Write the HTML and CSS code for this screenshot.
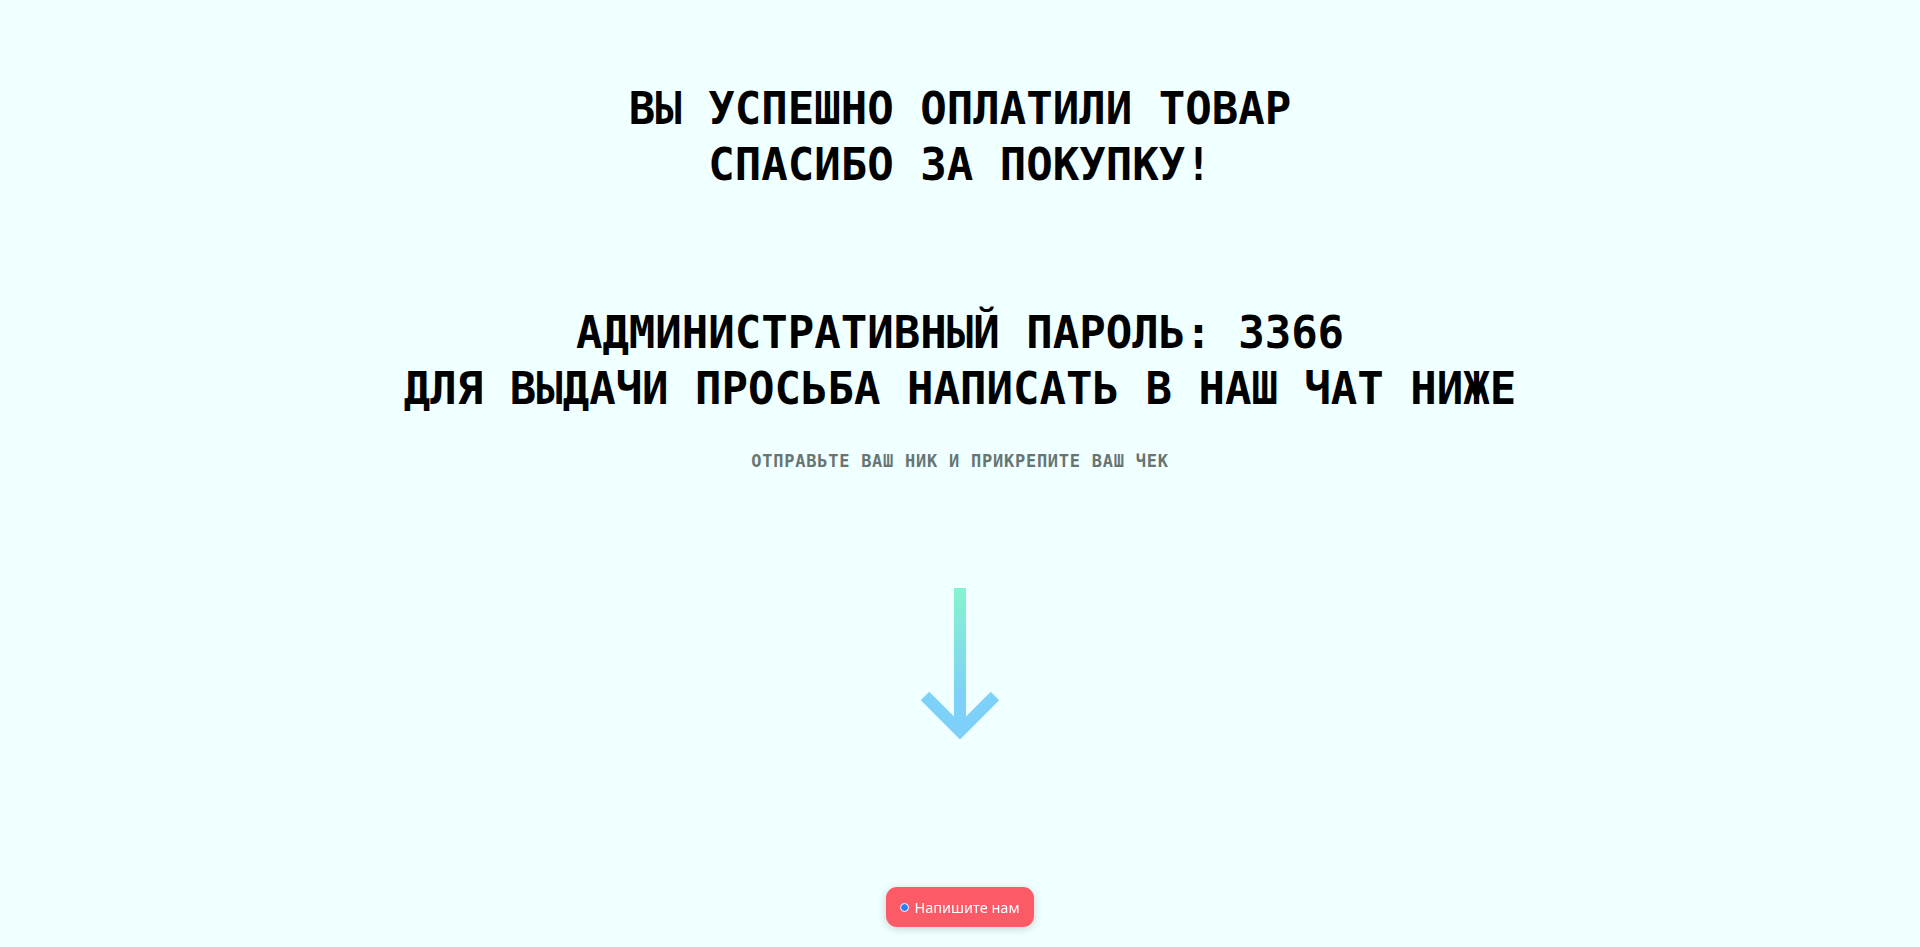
FILE: index.html
```html
<!DOCTYPE html>
<html lang="ru">
<head>
<meta charset="utf-8">
<title>Спасибо за покупку</title>
<link rel="stylesheet" href="styles.css">
</head>
<body>
<main class="page">
  <h1 class="title">ВЫ УСПЕШНО ОПЛАТИЛИ ТОВАР<br>СПАСИБО ЗА ПОКУПКУ!</h1>
  <h2 class="title title-second">АДМИНИСТРАТИВНЫЙ ПАРОЛЬ: 3366<br>ДЛЯ ВЫДАЧИ ПРОСЬБА НАПИСАТЬ В НАШ ЧАТ НИЖЕ</h2>
  <p class="subtitle">ОТПРАВЬТЕ ВАШ НИК И ПРИКРЕПИТЕ ВАШ ЧЕК</p>
  <div class="arrow">
    <svg width="80" height="156" viewBox="0 0 80 156">
      <defs>
        <linearGradient id="ag" x1="0" y1="0" x2="0" y2="156" gradientUnits="userSpaceOnUse">
          <stop offset="0" stop-color="#87f3cd"/>
          <stop offset="0.7" stop-color="#7dd1f8"/>
          <stop offset="1" stop-color="#7dcff9"/>
        </linearGradient>
      </defs>
      <rect x="34" y="0" width="12" height="144" fill="url(#ag)"/>
      <polyline points="5,108 40,143 75,108" fill="none" stroke="url(#ag)" stroke-width="12" stroke-linejoin="miter"/>
    </svg>
  </div>
</main>
<button class="chat-btn"><span class="chat-dot"></span>Напишите нам</button>
</body>
</html>
```
FILE: styles.css
```css
html, body {
  margin: 0;
  padding: 0;
  background: #f0ffff;
  height: 100%;
}
.page {
  display: flex;
  flex-direction: column;
  align-items: center;
  padding-top: 81px;
  font-family: "DejaVu Sans Mono", "Liberation Mono", monospace;
}
.title {
  margin: 0;
  font-size: 44px;
  font-weight: bold;
  letter-spacing: 0;
  line-height: 56px;
  text-align: center;
  color: #000;
}
.title-second {
  margin-top: 112px;
}
.subtitle {
  margin: 34px 0 0;
  font-size: 17px;
  font-weight: bold;
  letter-spacing: 0.75px;
  line-height: 20px;
  color: #677573;
  text-align: center;
}
.arrow {
  margin-top: 117px;
  display: flex;
  justify-content: center;
}
.arrow svg { display: block; }
.chat-btn {
  position: fixed;
  left: 50%;
  bottom: 20px;
  transform: translateX(-50%);
  width: 148px;
  height: 40px;
  display: flex;
  align-items: center;
  justify-content: center;
  gap: 5px;
  border: none;
  border-radius: 11px;
  background: #fd5a68;
  color: #fff;
  font-family: "Noto Sans", "Open Sans", sans-serif;
  font-size: 14.5px;
  box-shadow: 0 2px 8px rgba(0, 0, 0, 0.18);
  padding: 0;
}
.chat-dot {
  width: 7px;
  height: 7px;
  border-radius: 50%;
  background: #2f7df6;
  border: 1px solid #fff;
}
```
